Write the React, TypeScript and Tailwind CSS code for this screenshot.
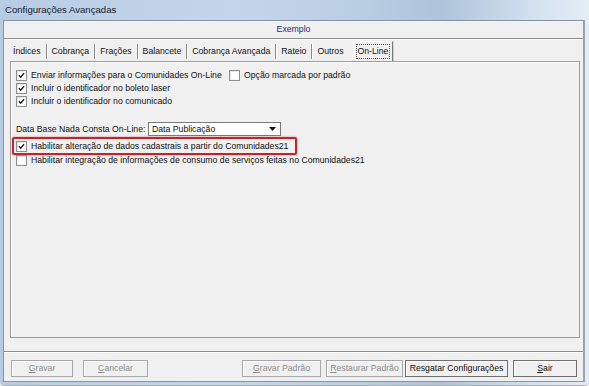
import React from "react";

function Check({ checked }: { checked: boolean }) {
  return (
    <div className="w-[11px] h-[11px] shrink-0 border border-[#8e8f8f] bg-gradient-to-br from-[#dcdcdc] to-white p-[1px]">
      <div className="w-full h-full bg-white flex items-center justify-center">
        {checked && (
          <svg width="9" height="9" viewBox="0 0 9 9">
            <path d="M1.2 4.3 L3.4 6.6 L7.8 1.6" fill="none" stroke="#1b1b1b" strokeWidth="1.8" />
          </svg>
        )}
      </div>
    </div>
  );
}

function Btn({ u, rest, disabled, w }: { u: string; rest: string; disabled?: boolean; w: string }) {
  return (
    <div
      className={
        "h-[17px] flex items-center justify-center border bg-[#f0f0f0] shadow-[inset_1px_1px_0_#ffffff] " +
        w +
        (disabled ? " border-[#a8a8a8] text-[#8c8c8c]" : " border-[#6f6f6f] text-[#111]")
      }
    >
      <span>
        {u && <span className="underline underline-offset-[1px]">{u}</span>}
        {rest}
      </span>
    </div>
  );
}

export default function App() {
  const tabs = ["Índices", "Cobrança", "Frações", "Balancete", "Cobrança Avançada", "Rateio", "Outros"];
  return (
    <div className="w-[589px] h-[386px] overflow-hidden bg-white font-['Liberation_Sans',Arial,sans-serif] text-[8.7px] leading-none text-[#111]">
      <div className="h-[385px] flex flex-col rounded-b-[4px] bg-[linear-gradient(90deg,#b7cce4_0%,#c3d5ea_40%,#b9cde3_62%,#aec3da_75%,#d6e3f1_92%,#e4edf6_100%)] shadow-[0_1px_1px_rgba(0,0,0,0.35)]">
        <div className="h-[20px] flex items-center pl-[5px] text-[9.6px] text-[#15202b]">Configurações Avançadas</div>
        <div className="flex-1 ml-[3px] mr-[4px] mb-[3px] flex flex-col bg-[#f0f0f0] border border-[#8594a6] border-r-[2px] border-r-[#9aa2ab]">
          {/* Header */}
          <div className="h-[18px] flex items-center justify-center border-b border-[#8c8c8c] text-[#27277a]">
            Exemplo
          </div>
          {/* Tabs */}
          <div className="h-[22px] flex items-end pl-[4px] border-t border-white">
            <div className="h-[20px] flex items-center">
              {tabs.map((t, i) => (
                <React.Fragment key={t}>
                  <div className="px-[5px]">{t}</div>
                  {i < tabs.length - 1 && <div className="w-[1px] h-[15px] bg-[#8a8a8a] shadow-[1px_0_0_#ffffff]" />}
                </React.Fragment>
              ))}
              <div className="w-[4px]" />
              <div className="h-[20px] flex items-center px-[2px] border-l border-t border-white border-r border-r-[#7b7b7b] bg-[#f0f0f0] shadow-[1px_0_0_#cfcfcf]">
                <div className="border border-dotted border-[#555] px-[1px] py-[2px]">On-Line</div>
              </div>
            </div>
          </div>
          {/* Content box */}
          <div className="h-[277px] ml-[6px] mr-[3px] border border-[#9c9c9c] shadow-[inset_1px_1px_0_#ffffff] flex flex-col pt-[7px] pl-[5px]">
            <div className="h-[13px] flex items-center">
              <div className="w-[213px] flex items-center gap-[4px]">
                <Check checked />
                <span>Enviar informações para o Comunidades On-Line</span>
              </div>
              <div className="flex items-center gap-[4px]">
                <Check checked={false} />
                <span>Opção marcada por padrão</span>
              </div>
            </div>
            <div className="h-[13px] flex items-center gap-[4px]">
              <Check checked />
              <span>Incluir o identificador no boleto laser</span>
            </div>
            <div className="h-[13px] flex items-center gap-[4px]">
              <Check checked />
              <span>Incluir o identificador no comunicado</span>
            </div>
            <div className="mt-[14px] h-[14px] flex items-center">
              <div className="w-[132px]">Data Base Nada Consta On-Line:</div>
              <div className="w-[133px] h-[14px] bg-white border border-[#7a7a7a] flex items-center justify-between pl-[3px] pr-[4px]">
                <span>Data Publicação</span>
                <svg width="7" height="4" viewBox="0 0 7 4">
                  <path d="M0 0 L7 0 L3.5 4 Z" fill="#111" />
                </svg>
              </div>
            </div>
            <div className="mt-[1px] -ml-[4px] w-[285px] h-[18px] border-[2px] border-[#c7222a] rounded-[2px] shadow-[0_0_2px_rgba(200,30,40,0.6)] flex items-center pl-[2px] gap-[4px]">
              <Check checked />
              <span>Habilitar alteração de dados cadastrais a partir do Comunidades21</span>
            </div>
            <div className="-mt-[1px] h-[12px] flex items-center gap-[4px]">
              <Check checked={false} />
              <span>Habilitar integração de informações de consumo de serviços feitas no Comunidades21</span>
            </div>
          </div>
          <div className="h-[13px]" />
          {/* Buttons */}
          <div className="flex-1 border-t border-[#8c8c8c] shadow-[inset_0_1px_0_#ffffff] flex items-start pt-[8px] pl-[7px] pr-[6px]">
            <Btn u="G" rest="ravar" disabled w="w-[62px]" />
            <div className="w-[10px]" />
            <Btn u="C" rest="ancelar" disabled w="w-[65px]" />
            <div className="flex-1" />
            <Btn u="G" rest="ravar Padrão" disabled w="w-[79px]" />
            <div className="w-[5px]" />
            <Btn u="R" rest="estaurar Padrão" disabled w="w-[77px]" />
            <div className="w-[2px]" />
            <Btn u="" rest="Resgatar Configurações" w="w-[103px]" />
            <div className="w-[5px]" />
            <Btn u="S" rest="air" w="w-[64px]" />
          </div>
        </div>
      </div>
    </div>
  );
}
